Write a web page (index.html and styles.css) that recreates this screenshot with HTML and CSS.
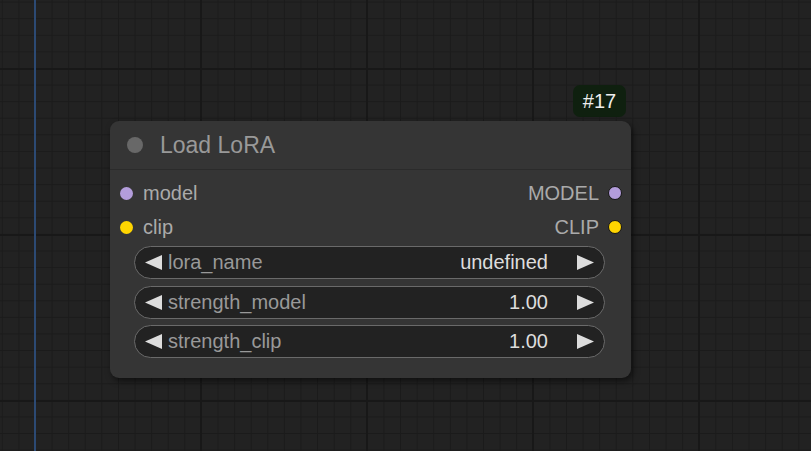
FILE: index.html
```html
<!DOCTYPE html>
<html>
<head>
<meta charset="utf-8">
<link rel="stylesheet" href="styles.css">
</head>
<body>
<div class="canvas">
  <div class="axis"></div>
  <div class="badge">#17</div>
  <div class="node">
    <div class="title">
      <span class="title-dot"></span>
      <span class="title-text">Load LoRA</span>
    </div>
    <div class="body">
      <div class="slot-row">
        <div class="slot in"><span class="dot lav"></span><span>model</span></div>
        <div class="slot out"><span>MODEL</span><span class="dot lav ring"></span></div>
      </div>
      <div class="slot-row">
        <div class="slot in"><span class="dot yel"></span><span>clip</span></div>
        <div class="slot out"><span>CLIP</span><span class="dot yel ring"></span></div>
      </div>
      <div class="widgets">
        <div class="widget">
          <svg class="arrow" width="17" height="15" viewBox="0 0 17 15"><polygon points="17,0 17,15 0,7.5"/></svg>
          <span class="label">lora_name</span>
          <span class="value">undefined</span>
          <svg class="arrow" width="17" height="15" viewBox="0 0 17 15"><polygon points="0,0 0,15 17,7.5"/></svg>
        </div>
        <div class="widget">
          <svg class="arrow" width="17" height="15" viewBox="0 0 17 15"><polygon points="17,0 17,15 0,7.5"/></svg>
          <span class="label">strength_model</span>
          <span class="value">1.00</span>
          <svg class="arrow" width="17" height="15" viewBox="0 0 17 15"><polygon points="0,0 0,15 17,7.5"/></svg>
        </div>
        <div class="widget">
          <svg class="arrow" width="17" height="15" viewBox="0 0 17 15"><polygon points="17,0 17,15 0,7.5"/></svg>
          <span class="label">strength_clip</span>
          <span class="value">1.00</span>
          <svg class="arrow" width="17" height="15" viewBox="0 0 17 15"><polygon points="0,0 0,15 17,7.5"/></svg>
        </div>
      </div>
    </div>
  </div>
</div>
</body>
</html>
```
FILE: styles.css
```css
html, body {
  margin: 0;
  padding: 0;
  width: 811px;
  height: 451px;
  overflow: hidden;
}
body {
  font-family: "Liberation Sans", Arial, sans-serif;
  background-color: #222222;
}
.canvas {
  position: relative;
  width: 811px;
  height: 451px;
  background-color: #222222;
  background-image:
    linear-gradient(to right, #181818 0, #181818 2px, transparent 2px),
    linear-gradient(to bottom, #181818 0, #181818 2px, transparent 2px),
    linear-gradient(to right, #1b1b1b 0, #1b1b1b 1px, transparent 1px),
    linear-gradient(to bottom, #1b1b1b 0, #1b1b1b 1px, transparent 1px);
  background-size: 166px 166px, 166px 166px, 16.6px 16.6px, 16.6px 16.6px;
  background-position: 34px 68px, 34px 68px, 1.8px 1.6px, 1.8px 1.6px;
}
.axis {
  position: absolute;
  left: 34px;
  top: 0;
  width: 2px;
  height: 451px;
  background: #2c4a74;
}
.badge {
  position: absolute;
  left: 573px;
  top: 85px;
  width: 53px;
  height: 32px;
  border-radius: 7px;
  background: #0f200f;
  color: #eeeeee;
  font-size: 20px;
  display: flex;
  align-items: center;
  justify-content: center;
}
.node {
  position: absolute;
  left: 110px;
  top: 121px;
  width: 521px;
  height: 257px;
  background: #353535;
  border-radius: 9px;
  box-shadow: 2px 3px 6px rgba(0, 0, 0, 0.55);
  display: flex;
  flex-direction: column;
}
.title {
  height: 48px;
  border-bottom: 1px solid #2b2b2b;
  display: flex;
  align-items: center;
  padding-left: 17px;
  gap: 17px;
}
.title-dot {
  width: 16px;
  height: 16px;
  border-radius: 50%;
  background: #686868;
}
.title-text {
  color: #999999;
  font-size: 23px;
  margin-top: 1px;
}
.body {
  display: flex;
  flex-direction: column;
  padding-top: 6px;
}
.slot-row {
  height: 34px;
  display: flex;
  align-items: center;
  justify-content: space-between;
  padding: 0 9px 0 10px;
  color: #aaaaaa;
  font-size: 20px;
}
.slot {
  display: flex;
  align-items: center;
  gap: 10px;
}
.out {
  gap: 9px;
}
.dot {
  width: 13px;
  height: 13px;
  border-radius: 50%;
  box-sizing: border-box;
}
.dot.ring {
  width: 14px;
  height: 14px;
  border: 1.5px solid #151515;
}
.lav { background: #b39ddb; }
.yel { background: #ffd500; }
.widgets {
  display: flex;
  flex-direction: column;
  gap: 6.5px;
  margin: 2px 26px 0 24px;
}
.widget {
  height: 33px;
  box-sizing: border-box;
  border: 1px solid #6a6a6a;
  border-radius: 17px;
  background: #222222;
  display: flex;
  align-items: center;
  padding: 0 10px;
  font-size: 20px;
}
.arrow {
  fill: #dddddd;
  flex: none;
}
.label {
  color: #999999;
  margin-left: 6px;
  flex: 1;
}
.value {
  color: #dddddd;
  margin-right: 29px;
}
```
